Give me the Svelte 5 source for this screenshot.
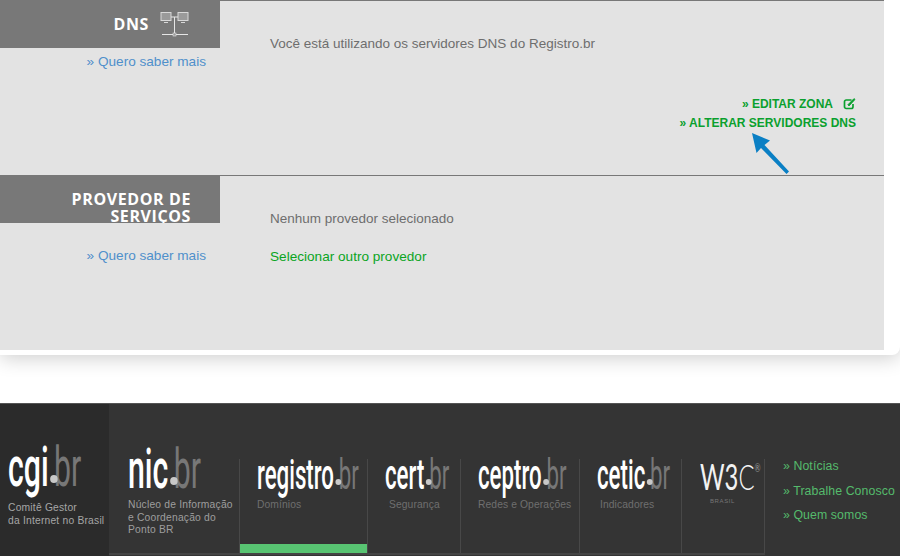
<script>
  const brands = [
    { name: 'registro', sub: 'Domínios', cls: 'registro', active: true },
    { name: 'cert', sub: 'Segurança', cls: 'cert' },
    { name: 'ceptro', sub: 'Redes e Operações', cls: 'ceptro' },
    { name: 'cetic', sub: 'Indicadores', cls: 'cetic' }
  ];
  const links = ['Notícias', 'Trabalhe Conosco', 'Quem somos'];
</script>

<div class="page">
  <div class="card">
    <div class="panel">
      <section class="row dns">
        <div class="side">
          <div class="head">
            <h2>DNS</h2>
            <svg class="net" width="30" height="26" viewBox="0 0 30 26" fill="none">
              <rect x="1" y="1.500" width="10" height="8" fill="#9a9a9a" stroke="#d8d8d8" />
              <rect x="18" y="1.500" width="10" height="8" fill="#9a9a9a" stroke="#d8d8d8" />
              <path d="M4 11.500h4M21 11.500h4" stroke="#d8d8d8" />
              <path d="M11 6h7M14.500 6v17M2 23.500h26" stroke="#e6e6e6" />
              <rect x="13" y="22" width="3" height="3" fill="#999" stroke="#e6e6e6" stroke-width=".6" />
            </svg>
          </div>
          <a class="more" href="#dns">» Quero saber mais</a>
        </div>
        <div class="main">
          <p class="status">Você está utilizando os servidores DNS do Registro.br</p>
          <div class="actions">
            <a href="#zona">» EDITAR ZONA
              <svg class="edit" width="13" height="12" viewBox="0 0 13 12" fill="none" stroke="#0aa02e" stroke-width="1.700">
                <path d="M8.500 2H3.200A1.700 1.700 0 0 0 1.500 3.700v5.100a1.700 1.700 0 0 0 1.700 1.700h5.100a1.700 1.700 0 0 0 1.700-1.700V6" />
                <path d="M4.800 6.800 6 8 12 1.500 11 .6z" fill="#0aa02e" stroke-width=".8" />
              </svg>
            </a>
            <a href="#servidores">» ALTERAR SERVIDORES DNS</a>
          </div>
        </div>
        <svg class="arrow" width="40" height="44" viewBox="0 0 40 44">
          <path d="M1 1 19 8.500 13.500 13 38 39.500 35.500 42 10 16 5.500 21z" fill="#0a7fc4" />
        </svg>
      </section>
      <section class="row provider">
        <div class="side">
          <div class="head">
            <h2>PROVEDOR DE SERVIÇOS</h2>
          </div>
          <a class="more" href="#provedor">» Quero saber mais</a>
        </div>
        <div class="main">
          <p class="status">Nenhum provedor selecionado</p>
          <a class="select" href="#selecionar">Selecionar outro provedor</a>
        </div>
      </section>
    </div>
  </div>

  <footer>
    <div class="cgi">
      <span class="logo big"><span class="name">cgi</span><span class="dot"></span><span class="br">br</span></span>
      <p>Comitê Gestor<br />da Internet no Brasil</p>
    </div>
    <div class="orgs">
      <div class="nic">
        <span class="logo big"><span class="name">nic</span><span class="dot"></span><span class="br">br</span></span>
        <p>Núcleo de Informação<br />e Coordenação do<br />Ponto BR</p>
      </div>
      {#each brands as b}
        <div class={['brand', b.cls, { active: b.active }]}>
          <span class="logo"><span class="name">{b.name}</span><span class="dot"></span><span class="br">br</span></span>
          <small>{b.sub}</small>
        </div>
      {/each}
      <div class="brand w3c">
        <span class="w3"><span>W3</span><span class="c">C</span><sup>®</sup></span>
        <em>BRASIL</em>
      </div>
    </div>
    <nav>
      {#each links as l}
        <a href="#l">» {l}</a>
      {/each}
    </nav>
  </footer>
</div>

<style>
  :global(body) {
    margin: 0;
    background: #fff;
    font-family: "Liberation Sans", Arial, sans-serif;
  }
  .page {
    width: 900px;
    height: 556px;
    overflow: hidden;
    display: flex;
    flex-direction: column;
  }
  .card {
    height: 355px;
    flex: none;
    background: #fff;
    border-radius: 0 0 8px 0;
    box-shadow: 0 3px 20px rgba(0, 0, 0, 0.2);
    margin-bottom: 48px;
  }
  .panel {
    width: 884px;
    height: 350px;
    background: #e3e3e3;
    display: flex;
    flex-direction: column;
  }
  .row {
    position: relative;
    display: flex;
    border-top: 1px solid #787878;
  }
  .dns {
    height: 174px;
  }
  .provider {
    flex: 1;
  }
  .side {
    width: 220px;
    flex: none;
    display: flex;
    flex-direction: column;
    align-items: flex-end;
  }
  .head {
    width: 220px;
    height: 47px;
    background: #787878;
    box-sizing: border-box;
    display: flex;
    justify-content: flex-end;
    align-items: center;
    overflow: hidden;
  }
  .dns .head {
    padding-right: 30px;
    gap: 11px;
  }
  .net {
    margin-top: -1px;
  }
  h2 {
    margin: 0;
    color: #fff;
    font: 700 16px/17px "Open Sans", sans-serif;
    letter-spacing: 0.6px;
    text-align: right;
  }
  .dns h2 {
    margin-top: -1px;
  }
  .provider .head {
    padding: 15px 29px 0 40px;
    align-items: flex-start;
  }
  .more {
    font-size: 13.600px;
    line-height: 16px;
    color: #4f90cb;
    text-decoration: none;
    margin-right: 14px;
  }
  .dns .more {
    margin-top: 6px;
  }
  .provider .more {
    margin-top: 25px;
  }
  .main {
    flex: 1;
    padding: 0 28px 0 50px;
    display: flex;
    flex-direction: column;
  }
  .status {
    margin: 35px 0 0;
    font-size: 13.500px;
    line-height: 16px;
    color: #6e6e6e;
  }
  .provider .status {
    margin-top: 35px;
  }
  .actions {
    margin-top: 44px;
    display: flex;
    flex-direction: column;
    align-items: flex-end;
    gap: 3px;
  }
  .actions a {
    display: flex;
    align-items: center;
    gap: 10px;
    font: 700 12px/16px "Liberation Sans", sans-serif;
    color: #0aa02e;
    text-decoration: none;
  }
  .select {
    margin-top: 22px;
    font-size: 13.600px;
    line-height: 16px;
    color: #0aa51e;
    text-decoration: none;
  }
  .arrow {
    position: absolute;
    left: 751px;
    top: 131px;
  }
  footer {
    flex: 1;
    display: flex;
    background: #343434;
    border-top: 1px solid #555;
    color: #aaa;
  }
  .cgi {
    width: 109px;
    flex: none;
    box-sizing: border-box;
    background: #2b2b2b;
    padding: 44px 0 0 8px;
  }
  .cgi p,
  .nic p {
    margin: 0;
    font: 10.300px/12.500px "Liberation Sans", sans-serif;
    letter-spacing: 0.2px;
    color: #a6a6a6;
    white-space: nowrap;
  }
  .cgi p {
    margin-top: 16px;
  }
  .orgs {
    display: flex;
    align-self: flex-start;
    margin-top: 55px;
    height: 94px;
    border-bottom: 2px solid #444;
  }
  .nic {
    width: 130px;
    box-sizing: border-box;
    padding: 0 0 0 19px;
    margin-top: -9px;
    height: 103px;
  }
  .nic p {
    margin-top: 11px;
    color: #9e9e9e;
  }
  .brand {
    border-left: 1px solid #484848;
    box-sizing: border-box;
    padding: 0 0 0 17px;
    position: relative;
    display: flex;
    flex-direction: column;
  }
  .registro { width: 128px; }
  .cert { width: 93px; }
  .ceptro { width: 119px; }
  .cetic { width: 102px; }
  .cert small { margin-left: 4px; }
  .cetic small { margin-left: 3px; }
  .w3c {
    width: 84px;
    border-right: 1px solid #484848;
  }
  .active::after {
    content: "";
    position: absolute;
    left: 0;
    right: 0;
    bottom: 0;
    height: 9px;
    background: #58c472;
  }
  .logo {
    display: flex;
    align-items: flex-end;
    height: 31px;
    font: 500 42px/31px Roboto, sans-serif;
    color: #fff;
    white-space: nowrap;
    transform: scaleX(0.53);
    transform-origin: left bottom;
    position: relative;
  }
  .logo .br {
    color: #777;
    font-weight: 400;
  }
  .logo .dot {
    width: 11px;
    height: 6px;
    border-radius: 50%;
    background: #c8c8c8;
    margin: 0 -5px 5px 3px;
    flex: none;
    position: relative;
    z-index: 1;
  }
  .big {
    height: 38px;
    font-size: 56px;
    line-height: 38px;
    transform: scaleX(0.54);
  }
  .big .dot {
    width: 14px;
    height: 8px;
    margin: 0 -7px 3px 3px;
  }
  small {
    margin-top: 8px;
    font: 10.300px/13px "Liberation Sans", sans-serif;
    letter-spacing: 0.1px;
    color: #6f6f6f;
    white-space: nowrap;
  }
  .w3 {
    font: 400 36px/30px Lato, sans-serif;
    color: #f2f2f2;
    display: flex;
    transform: scaleX(0.66);
    transform-origin: left;
    margin: 2px 0 0 1px;
  }
  .w3 .c {
    font-weight: 300;
  }
  .w3 sup {
    font-size: 11px;
    line-height: 14px;
    color: #999;
  }
  .w3c em {
    font: normal 6px/8px "Liberation Sans", sans-serif;
    letter-spacing: 0.6px;
    color: #777;
    margin: 6px 0 0 11px;
  }
  nav {
    display: flex;
    flex-direction: column;
    gap: 9px;
    padding: 55px 0 0 18px;
  }
  nav a {
    font-size: 12.300px;
    line-height: 15.500px;
    letter-spacing: 0.1px;
    color: #55bb6c;
    text-decoration: none;
    white-space: nowrap;
  }
</style>
